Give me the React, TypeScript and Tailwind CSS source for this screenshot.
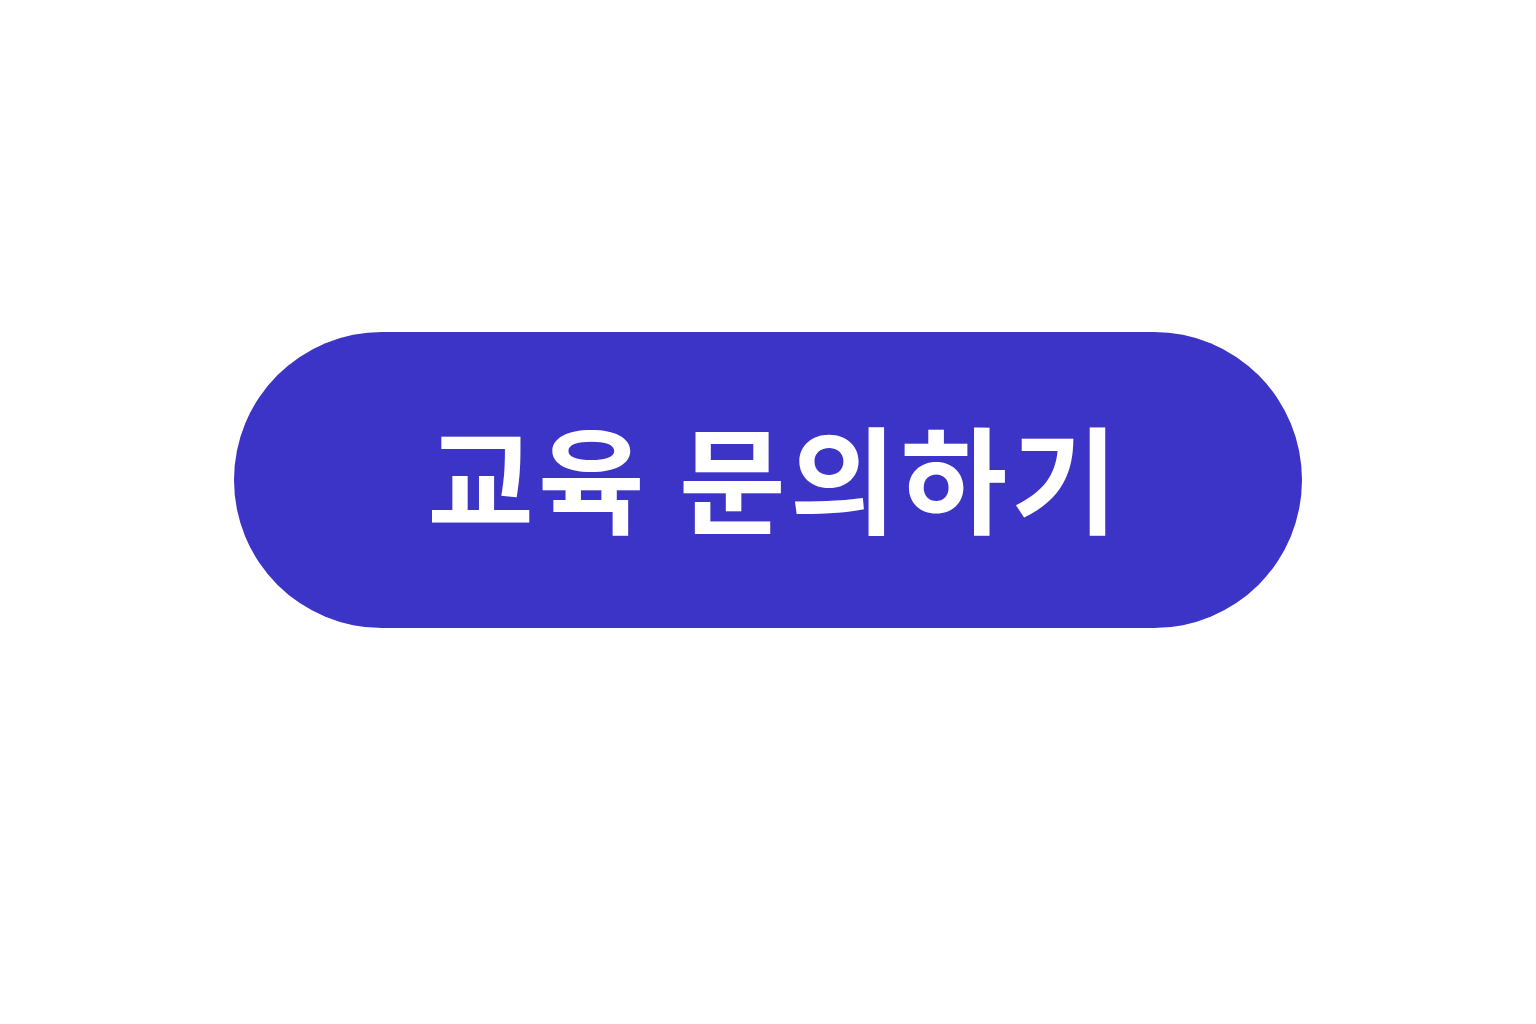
import React from 'react';

// Rounded call-to-action button for education inquiries
const InquiryButton: React.FC<{ label: string }> = ({ label }) => {
    return (
        <button
            type="button"
            className="w-[1068px] h-[296px] rounded-full bg-[#3b34c6] flex items-center justify-center text-white font-bold text-[116px] leading-none tracking-[4px]"
            style={{ fontFamily: '"Noto Sans CJK KR", "Noto Sans", sans-serif' }}
        >
            <span className="pb-[12px] pl-[13px]">{label}</span>
        </button>
    );
};

const App: React.FC = () => {
    return (
        <div className="w-full h-[1024px] bg-white flex justify-center pt-[332px]">
            <InquiryButton label="교육 문의하기" />
        </div>
    );
};

export default App;
